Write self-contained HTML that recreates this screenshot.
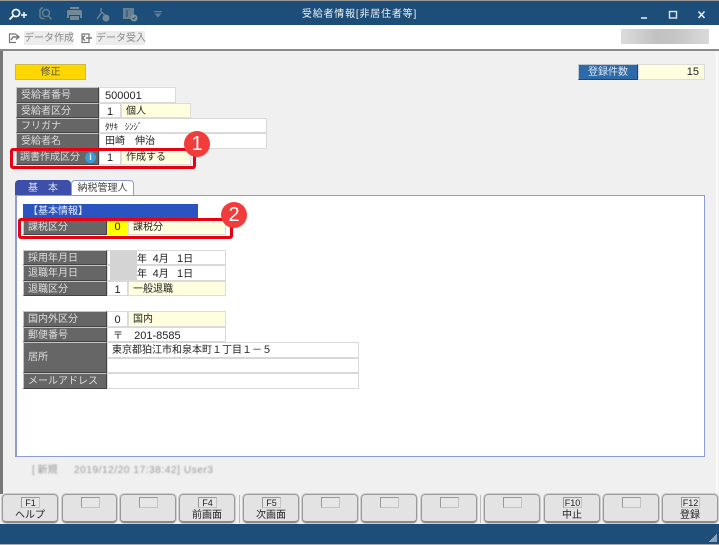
<!DOCTYPE html>
<html lang="ja"><head><meta charset="utf-8"><title>受給者情報</title>
<style>
html,body{margin:0;padding:0;background:#fff}
#p{position:relative;width:719px;height:545px;overflow:hidden;background:#f0f0f0;font:10px/14px "Liberation Sans","Noto Sans CJK JP",sans-serif;color:#222;filter:blur(.3px)}
#p div{position:absolute;box-sizing:border-box;white-space:pre}
#p span{font-size:11px}
.l{background:#666;color:#ddd;border:1px solid #c4c4c4;border-right:1px solid #444;border-bottom:1px solid #444;padding:1px 0 0 4px;font-size:10px;line-height:14px}
.w{background:#fff;border:1px solid #d9d9d9;padding:1px 0 0 5px;line-height:14px}
.y{background:#ffffe0;border:1px solid #dcdcdc;padding:1px 0 0 4px;line-height:14px}
.b{background:#e3e3e3;border:1px solid #9a9a9a;border-bottom:2px solid #8c8c8c;border-radius:4px;text-align:center;outline:1px solid #cfcfcf}
.k{background:#e6e6e6;border:1px solid #c4c4c4;border-left:1px solid #999;border-top:1px solid #999;height:11px;width:19px;top:2px;left:18px;font-size:9px;line-height:10px;text-align:center;color:#222}
.t{top:14px;left:0;right:0;font-size:10px;line-height:14px;text-align:center;color:#222}
.red{border:3px solid #e60012;border-radius:3px}
.c{width:26px;height:26px;border-radius:50%;background:#f23c3c;color:#fff;text-align:center;font-size:20px;line-height:26px}
</style></head><body><div id="p">
<!-- frame -->
<div style="left:0;top:0;width:719px;height:1px;background:#999"></div>
<div style="left:0;top:1px;width:719px;height:24px;background:#1d4e79"></div>
<div style="left:0;top:25px;width:719px;height:25px;background:#fff"></div>
<div style="left:0;top:49px;width:719px;height:2px;background:#8a8a8a"></div>
<div style="left:0;top:51px;width:3px;height:443px;background:#777"></div>
<div style="left:716px;top:51px;width:2px;height:443px;background:#fafafa"></div>
<div style="left:0;top:524px;width:719px;height:20px;background:#1d4e79"></div>
<div style="left:0;top:544px;width:719px;height:1px;background:#aaa"></div>

<!-- title icons -->
<svg style="position:absolute;left:0;top:0" width="180" height="26" fill="none">
<circle cx="16" cy="13" r="3.6" stroke="#fff" stroke-width="1.6"/><path d="M13 16l-3.5 3.5" stroke="#fff" stroke-width="1.8"/><path d="M21 15h6M24 12v6" stroke="#fff" stroke-width="1.4"/>
<g stroke="#66808f" stroke-width="1.5"><path d="M43 8h-1.500l-1.500 2v7l1.500 1.500h3"/><circle cx="46" cy="13" r="3.500"/><path d="M48.500 16l3 3.500"/></g>
<path d="M69 10h12a1.500 1.500 0 0 1 1 1.500V18h-2v-3H69v3h-2v-6.500a1.500 1.500 0 0 1 2-1.500zM70 7h9v2h-9zM70 16h9v4h-9z" fill="#728896"/>
<path d="M101 8v4M102 12l-5 7M102 12l5 6" stroke="#728896" stroke-width="1.300"/><circle cx="106" cy="18" r="3.500" fill="#728896"/>
<path d="M123 8h11v11h-11z" fill="#66808f"/><circle cx="134" cy="18" r="3.500" fill="#82959f"/><path d="M127 10v7" stroke="#1d4e79"/><path d="M132.500 18l1 1 2-2" stroke="#1d4e79"/>
<path d="M154 11h8v1.300h-8zM154.500 13.500h7L158 17.500z" fill="#66808f"/>
</svg>
<div style="left:0;top:7px;width:719px;text-align:center;color:#eef2f5;font-size:10px;line-height:15px;letter-spacing:.8px">受給者情報[非居住者等]</div>
<svg style="position:absolute;left:636px;top:8px" width="70" height="14" fill="none">
<path d="M5 10h6" stroke="#dfe7ee" stroke-width="1.600"/><rect x="33.500" y="3.500" width="7" height="6.500" stroke="#dfe7ee" stroke-width="1.400"/><path d="M62.500 3.500l6 6.500M68.500 3.500l-6 6.500" stroke="#eef2f5" stroke-width="1.500"/>
</svg>

<!-- toolbar -->
<svg style="position:absolute;left:8px;top:31px" width="90" height="14" fill="none" stroke="#777" stroke-width="1.200">
<path d="M8 3H1.500v8.500H8"/><path d="M3 9l2-3h5M8 3.500L11 6 8 8.500" stroke-width="1.400"/>
<path d="M74 3h7v8.500h-7z"/><path d="M84 7h-6M77 4.500L74.500 7 77 9.500" stroke-width="1.500"/>
</svg>
<div style="left:24px;top:31px;width:49px;height:14px;background:#ececec;color:#888;font-size:10px;line-height:15px">データ作成</div>
<div style="left:96px;top:31px;width:49px;height:14px;background:#ececec;color:#888;font-size:10px;line-height:15px">データ受入</div>
<div style="left:621px;top:29px;width:88px;height:15px;background:linear-gradient(90deg,#dcdcdc,#c2c2c2 40%,#c4c4c4 60%,#dadada)"></div>

<!-- mode -->
<div style="left:15px;top:64px;width:71px;height:16px;background:#ffd700;border:1px solid #cdb84e;text-align:center;line-height:15px;font-size:10px;color:#555">修正</div>
<div style="left:578px;top:64px;width:60px;height:16px;background:#2f6aa8;border:1px solid #bcc6d0;border-right:1px solid #24466d;border-bottom:1px solid #24466d;color:#d8e4f0;text-align:center;line-height:15px;font-size:10px">登録件数</div>
<div style="left:638px;top:64px;width:67px;height:16px;background:#ffffe0;border:1px solid #dcdcdc;text-align:right;padding-right:5px;line-height:15px"><span>15</span></div>

<!-- upper form -->
<div class="l" style="left:16px;top:87px;width:83px;height:16px">受給者番号</div>
<div class="w" style="left:99px;top:87px;width:77px;height:16px"><span>500001</span></div>
<div class="l" style="left:16px;top:103px;width:83px;height:15px">受給者区分</div>
<div class="w" style="left:99px;top:103px;width:22px;height:15px;text-align:center;padding-left:0"><span>1</span></div>
<div class="y" style="left:121px;top:103px;width:70px;height:15px">個人</div>
<div class="l" style="left:16px;top:118px;width:83px;height:15px">フリガナ</div>
<div class="w" style="left:99px;top:118px;width:168px;height:15px;font-size:9px;letter-spacing:-.2px">ﾀｻｷ   ｼﾝｼﾞ</div>
<div class="l" style="left:16px;top:133px;width:83px;height:16px">受給者名</div>
<div class="w" style="left:99px;top:133px;width:168px;height:16px">田崎　伸治</div>
<div class="l" style="left:16px;top:149px;width:83px;height:16px;padding-left:3px">調書作成区分</div>
<div class="w" style="left:99px;top:149px;width:22px;height:16px;text-align:center;padding-left:0"><span>1</span></div>
<div class="y" style="left:121px;top:149px;width:70px;height:16px">作成する</div>
<div style="left:85px;top:152px;width:11px;height:11px;border-radius:50%;background:#3a9bd8;color:#fff;font:bold 9px/11px 'Liberation Sans',sans-serif;text-align:center">i</div>
<div class="red" style="left:10px;top:148px;width:186px;height:21px"></div>
<div class="c" style="left:184px;top:131px">1</div>

<!-- tabs -->
<div style="left:15px;top:180px;width:56px;height:16px;background:#3d4fa8;color:#dfe3f5;border-radius:4px 4px 0 0;text-align:center;line-height:17px;font-size:10px">基　本</div>
<div style="left:71px;top:180px;width:63px;height:16px;background:#fff;border:1px solid #8f9bd6;border-bottom:0;border-radius:4px 4px 0 0;text-align:center;line-height:16px;font-size:10px;color:#444">納税管理人</div>
<div style="left:15px;top:195px;width:690px;height:262px;background:#fff;border:1px solid #8f9bd6;border-left-width:2px"></div>

<div style="left:23px;top:204px;width:175px;height:15px;background:#2a55c0;color:#e6ecfa;line-height:16px;font-size:10px;padding-left:5px">【基本情報】</div>
<div class="l" style="left:23px;top:219px;width:84px;height:16px">課税区分</div>
<div style="left:107px;top:219px;width:21px;height:16px;background:#ffff00;text-align:center;line-height:16px"><span>0</span></div>
<div class="y" style="left:128px;top:219px;width:98px;height:16px">課税分</div>
<div class="red" style="left:18px;top:218px;width:215px;height:21px"></div>
<div class="c" style="left:221px;top:202px">2</div>

<div class="l" style="left:23px;top:250px;width:84px;height:15px">採用年月日</div>
<div class="w" style="left:107px;top:250px;width:119px;height:15px;padding-left:29px">年  <span>4</span>月   <span>1</span>日</div>
<div class="l" style="left:23px;top:265px;width:84px;height:16px">退職年月日</div>
<div class="w" style="left:107px;top:265px;width:119px;height:16px;padding-left:29px">年  <span>4</span>月   <span>1</span>日</div>
<div style="left:110px;top:251px;width:27px;height:29px;background:#d4d4d4"></div>
<div class="l" style="left:23px;top:281px;width:84px;height:15px">退職区分</div>
<div class="w" style="left:107px;top:281px;width:21px;height:15px;text-align:center;padding-left:0"><span>1</span></div>
<div class="y" style="left:128px;top:281px;width:98px;height:15px">一般退職</div>

<div class="l" style="left:23px;top:311px;width:84px;height:16px">国内外区分</div>
<div class="w" style="left:107px;top:311px;width:21px;height:16px;text-align:center;padding-left:0"><span>0</span></div>
<div class="y" style="left:128px;top:311px;width:98px;height:16px">国内</div>
<div class="l" style="left:23px;top:327px;width:84px;height:15px">郵便番号</div>
<div class="w" style="left:107px;top:327px;width:119px;height:15px;padding-left:5px">〒    <span>201-8585</span></div>
<div class="l" style="left:23px;top:342px;width:84px;height:31px;line-height:28px">居所</div>
<div class="w" style="left:107px;top:342px;width:252px;height:16px;padding-left:4px">東京都狛江市和泉本町１丁目１－５</div>
<div class="w" style="left:107px;top:358px;width:252px;height:15px"></div>
<div class="l" style="left:23px;top:373px;width:84px;height:16px">メールアドレス</div>
<div class="w" style="left:107px;top:373px;width:252px;height:16px"></div>

<div style="left:32px;top:464px;color:#999;font-size:10px;line-height:14px;filter:blur(.7px)">[ 新規</div>
<div style="left:74px;top:464px;color:#999;font-size:10px;line-height:14px;letter-spacing:.6px;filter:blur(.7px)">2019/12/20 17:38:42] User3</div>

<!-- function buttons -->
<div class="b" style="left:2px;top:494px;width:56px;height:29px"><div class="k">F1</div><div class="t">ヘルプ</div></div>
<div class="b" style="left:62px;top:494px;width:55px;height:29px"><div class="k"></div></div>
<div class="b" style="left:120px;top:494px;width:56px;height:29px"><div class="k"></div></div>
<div class="b" style="left:179px;top:494px;width:56px;height:29px"><div class="k">F4</div><div class="t">前画面</div></div>
<div style="left:239px;top:495px;width:1px;height:28px;background:#bbb"></div>
<div class="b" style="left:243px;top:494px;width:56px;height:29px"><div class="k">F5</div><div class="t">次画面</div></div>
<div class="b" style="left:302px;top:494px;width:56px;height:29px"><div class="k"></div></div>
<div class="b" style="left:361px;top:494px;width:56px;height:29px"><div class="k"></div></div>
<div class="b" style="left:421px;top:494px;width:56px;height:29px"><div class="k"></div></div>
<div style="left:480px;top:495px;width:1px;height:28px;background:#bbb"></div>
<div class="b" style="left:484px;top:494px;width:56px;height:29px"><div class="k"></div></div>
<div class="b" style="left:544px;top:494px;width:56px;height:29px"><div class="k">F10</div><div class="t">中止</div></div>
<div class="b" style="left:603px;top:494px;width:56px;height:29px"><div class="k"></div></div>
<div class="b" style="left:662px;top:494px;width:56px;height:29px"><div class="k">F12</div><div class="t">登録</div></div>
<svg style="position:absolute;left:708px;top:533px" width="10" height="10"><path d="M8 1h1v8H1v-1h1V7h1V6h1V5h1V4h1V3h1V2h1z" fill="#8aa2b5"/></svg>
</div></body></html>
